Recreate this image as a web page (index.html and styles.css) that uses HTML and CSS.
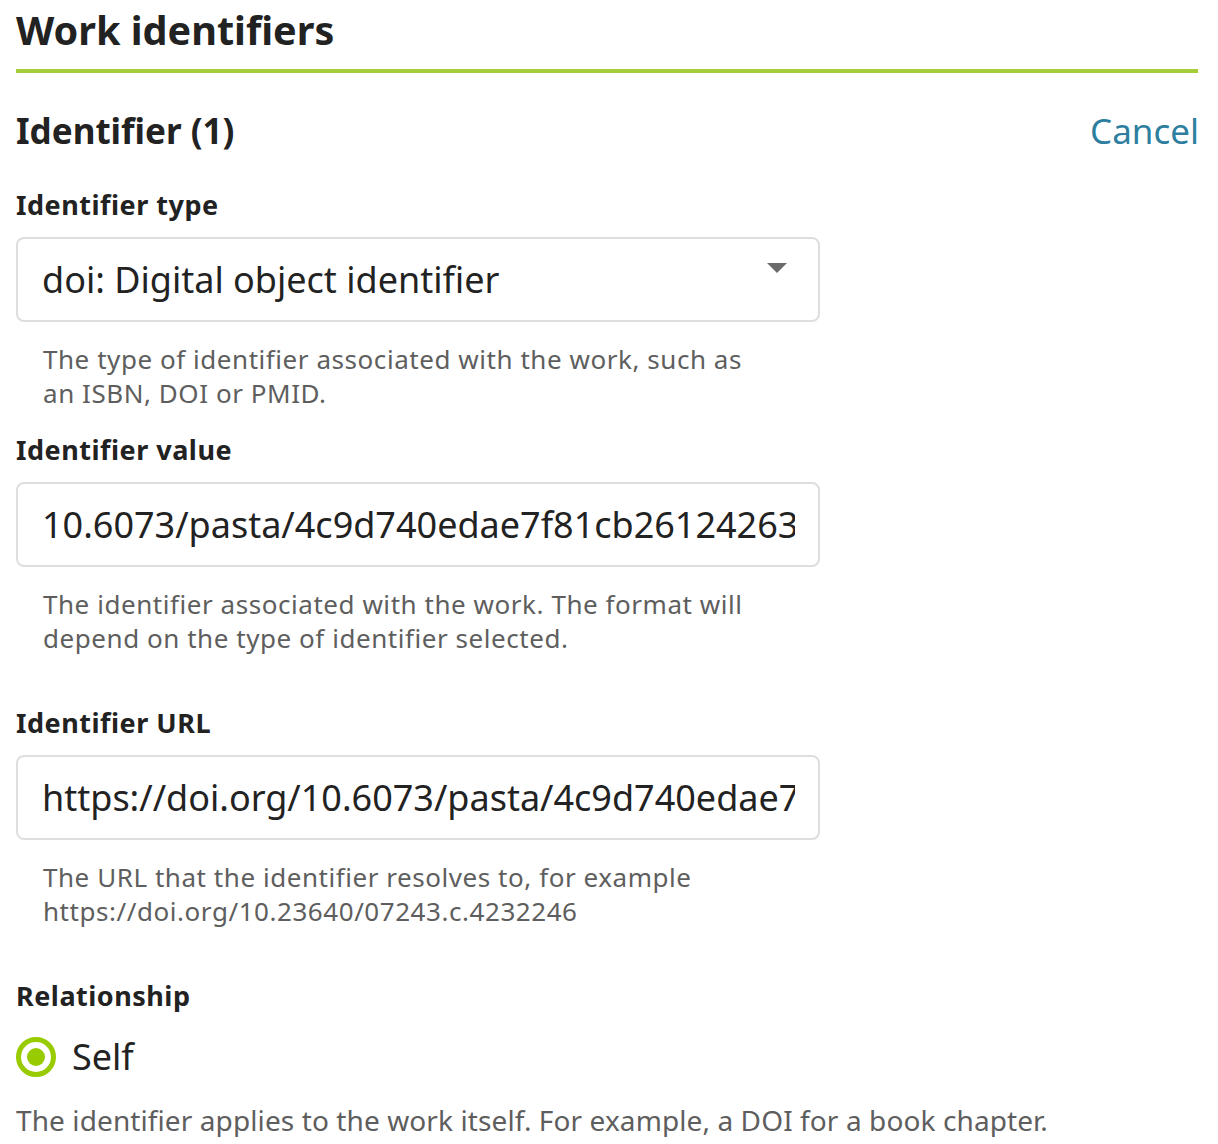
FILE: index.html
```html
<!DOCTYPE html>
<html lang="en">
<head>
<meta charset="utf-8">
<title>Work identifiers</title>
<link rel="stylesheet" href="styles.css">
</head>
<body>
<main class="panel">
  <h1 class="title">Work identifiers</h1>
  <div class="section-head">
    <h2 class="subtitle">Identifier (1)</h2>
    <a class="cancel" href="#">Cancel</a>
  </div>

  <div class="field first">
    <label class="label">Identifier type</label>
    <div class="box select">
      <span class="value">doi: Digital object identifier</span>
      <span class="caret"></span>
    </div>
    <p class="hint">The type of identifier associated with the work, such as<br>an ISBN, DOI or PMID.</p>
  </div>

  <div class="field">
    <label class="label">Identifier value</label>
    <div class="box">
      <span class="value clip">10.6073/pasta/4c9d740edae7f81cb26124263</span>
    </div>
    <p class="hint">The identifier associated with the work. The format will<br>depend on the type of identifier selected.</p>
  </div>

  <div class="field gap-top">
    <label class="label">Identifier URL</label>
    <div class="box">
      <span class="value clip">https://doi.org/10.6073/pasta/4c9d740edae7f81cb26124263</span>
    </div>
    <p class="hint">The URL that the identifier resolves to, for example<br>https://doi.org/10.23640/07243.c.4232246</p>
  </div>

  <div class="field gap-top">
    <label class="label">Relationship</label>
    <div class="radio-row">
      <span class="radio"><span class="dot"></span></span>
      <span class="radio-label">Self</span>
    </div>
    <p class="note">The identifier applies to the work itself. For example, a DOI for a book chapter.</p>
  </div>
</main>
</body>
</html>
```
FILE: styles.css
```css
html, body {
  margin: 0;
  padding: 0;
  background: #ffffff;
}
body {
  font-family: "Noto Sans", "Open Sans", sans-serif;
  color: #222222;
}
.panel {
  padding: 0 20px 0 16px;
  display: flex;
  flex-direction: column;
}
.title {
  margin: 0;
  font-size: 39.6px;
  font-weight: 700;
  line-height: 60px;
  padding-bottom: 9px;
  border-bottom: 4px solid #a6ce39;
}
.section-head {
  display: flex;
  justify-content: space-between;
  align-items: center;
  margin-top: 33px;
}
.subtitle {
  margin: 0;
  font-size: 35px;
  font-weight: 700;
  line-height: 50px;
}
.cancel {
  font-size: 35px;
  color: #2e7f9f;
  text-decoration: none;
  line-height: 50px;
  margin-right: -1px;
}
.field {
  display: flex;
  flex-direction: column;
  max-width: 804px;
  margin-top: 22px;
}
.field.first { margin-top: 31px; }
.field.gap-top { margin-top: 50px; }
.label {
  font-size: 27px;
  font-weight: 700;
  letter-spacing: 0.5px;
  line-height: 36px;
  margin-bottom: 14px;
}
.box {
  box-sizing: border-box;
  height: 85px;
  border: 2px solid #dedede;
  border-radius: 8px;
  display: flex;
  align-items: center;
  padding: 0 23px 0 24px;
  overflow: hidden;
}
.value {
  font-size: 36px;
  line-height: 46px;
  color: #222;
  white-space: nowrap;
}
.clip {
  overflow: hidden;
  flex: 1;
}
.select {
  justify-content: space-between;
}
.caret {
  width: 0;
  height: 0;
  border-left: 10px solid transparent;
  border-right: 10px solid transparent;
  border-top: 10px solid #6b6b6b;
  align-self: flex-start;
  margin-top: 24px;
  margin-right: 8px;
}
.hint {
  margin: 20px 0 0 27px;
  font-size: 26px;
  letter-spacing: 0.55px;
  line-height: 34px;
  color: #5e5e5e;
}
.radio-row {
  display: flex;
  align-items: center;
  gap: 16px;
  margin-top: 4px;
}
.radio {
  box-sizing: border-box;
  width: 40px;
  height: 40px;
  border: 5px solid #99cc00;
  border-radius: 50%;
  display: flex;
  align-items: center;
  justify-content: center;
}
.dot {
  width: 18px;
  height: 18px;
  border-radius: 50%;
  background: #99cc00;
}
.radio-label {
  font-size: 36px;
  line-height: 50px;
}
.note {
  margin: 21px 0 0 0;
  font-size: 28px;
  letter-spacing: 0.1px;
  line-height: 34px;
  color: #5e5e5e;
  white-space: nowrap;
}
```
